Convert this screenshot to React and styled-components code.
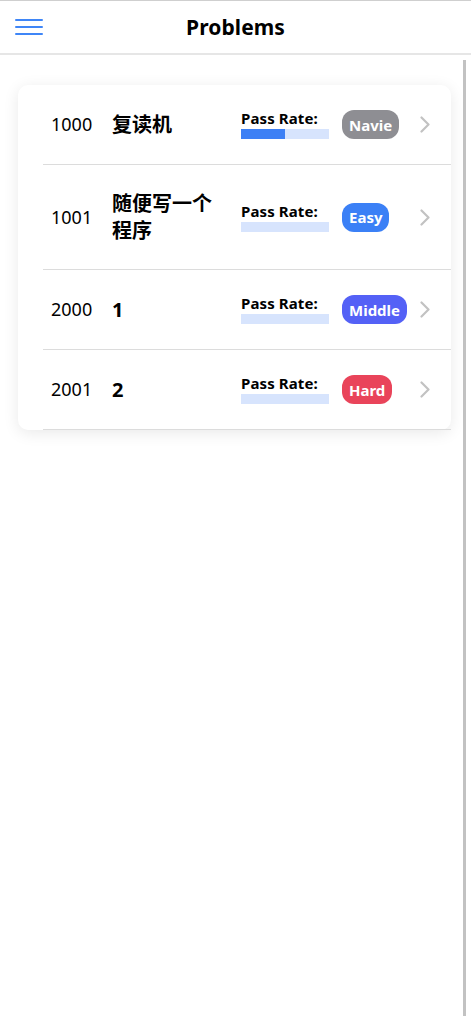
import React from "react";
import styled, { createGlobalStyle } from "styled-components";

const Global = createGlobalStyle`
  html, body { margin: 0; padding: 0; background: #fff; }
  body {
    font-family: "Noto Sans", "Noto Sans CJK SC", sans-serif;
    color: #000;
    border-top: 1px solid #cfcfcf;
  }
`;

const Header = styled.header`
  height: 52px;
  display: grid;
  grid-template-columns: 60px 1fr 60px;
  align-items: center;
  border-bottom: 2px solid #e6e6e6;
`;

const MenuButton = styled.button`
  border: 0;
  background: none;
  padding: 0 0 0 15px;
  display: flex;
  flex-direction: column;
  gap: 5px;
  cursor: pointer;
`;

const MenuLine = styled.span`
  display: block;
  width: 28px;
  height: 2px;
  background: #3f86f7;
  border-radius: 1px;
`;

const Title = styled.h1`
  margin: 0;
  text-align: center;
  font-size: 21px;
  font-weight: 700;
  letter-spacing: 0.1px;
`;

const Main = styled.main`
  box-sizing: border-box;
  width: 466px;
  height: 956px;
  margin-top: 5px;
  padding: 25px 12px 0 18px;
  border-right: 3px solid #c2c2c2;
`;

const Card = styled.ul`
  list-style: none;
  margin: 0;
  padding: 0 0 0 25px;
  background: #fff;
  border-radius: 10px;
  box-shadow: 0 3px 16px rgba(0, 0, 0, 0.09);
`;

const Row = styled.li`
  display: grid;
  grid-template-columns: 61px 129px 101px 78px 10px;
  align-items: center;
  padding: 25px 21px 25px 8px;
  border-bottom: 1px solid #dcdcdc;
`;

const Num = styled.span`
  font-size: 18px;
  line-height: 27px;
`;

const Name = styled.span`
  font-size: 20px;
  font-weight: 700;
  line-height: 27px;
  max-width: 112px;
`;

const Pass = styled.div`
  display: flex;
  flex-direction: column;
  gap: 2px;
`;

const PassLabel = styled.span`
  font-size: 15px;
  font-weight: 700;
  line-height: 17px;
  letter-spacing: 0.1px;
`;

const Track = styled.div`
  width: 88px;
  height: 10px;
  background: #d7e4fd;
`;

const Fill = styled.div`
  height: 100%;
  background: #3d80f5;
`;

const Badge = styled.span`
  justify-self: start;
  height: 29px;
  box-sizing: border-box;
  padding: 0 7px;
  display: inline-flex;
  align-items: center;
  border-radius: 12px;
  font-size: 15px;
  font-weight: 700;
  color: #fff;
  background: ${(p) => p.$bg};
`;

const Chevron = () => (
  <svg width="10" height="17" viewBox="0 0 10 17" fill="none">
    <path d="M1.5 1.5 L8.5 8.5 L1.5 15.5" stroke="#c2c2c2" strokeWidth="2.2" strokeLinecap="round" strokeLinejoin="round" />
  </svg>
);

const levels = {
  Navie: "#8e8e93",
  Easy: "#3b80f6",
  Middle: "#5461f6",
  Hard: "#e9445a",
};

const problems = [
  { id: 1000, name: "复读机", rate: 50, level: "Navie" },
  { id: 1001, name: "随便写一个程序", rate: 0, level: "Easy" },
  { id: 2000, name: "1", rate: 0, level: "Middle" },
  { id: 2001, name: "2", rate: 0, level: "Hard" },
];

export default function App() {
  return (
    <>
      <Global />
      <Header>
        <MenuButton aria-label="menu">
          <MenuLine />
          <MenuLine />
          <MenuLine />
        </MenuButton>
        <Title>Problems</Title>
        <span />
      </Header>
      <Main>
        <Card>
          {problems.map((p) => (
            <Row key={p.id}>
              <Num>{p.id}</Num>
              <Name>{p.name}</Name>
              <Pass>
                <PassLabel>Pass Rate:</PassLabel>
                <Track>
                  <Fill style={{ width: `${p.rate}%` }} />
                </Track>
              </Pass>
              <Badge $bg={levels[p.level]}>{p.level}</Badge>
              <Chevron />
            </Row>
          ))}
        </Card>
      </Main>
    </>
  );
}
